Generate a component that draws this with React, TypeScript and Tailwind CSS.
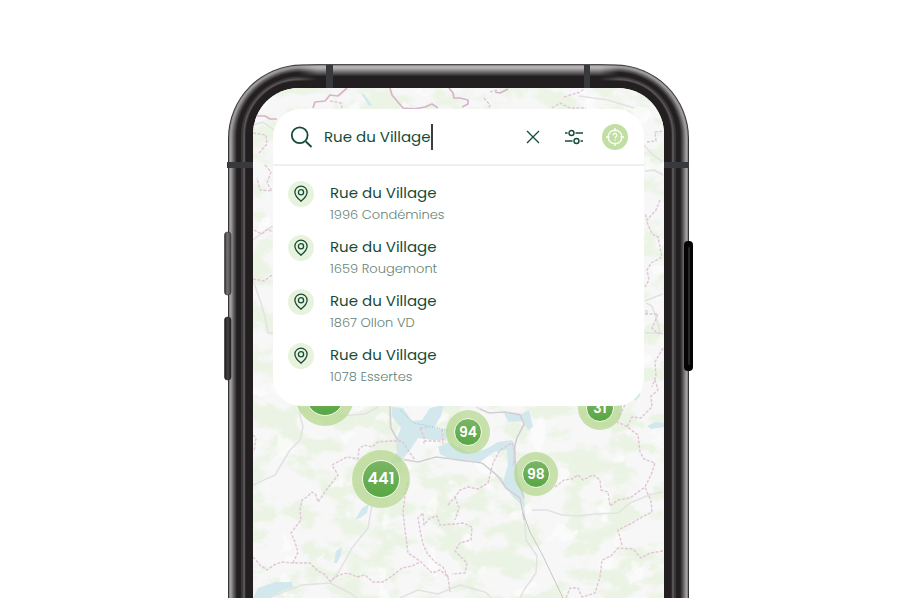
import type { ReactNode } from "react";

const addresses = ["1996 Condémines", "1659 Rougemont", "1867 Ollon VD", "1078 Essertes"];

const bezel: [number, string][] = [
  [0, "#353334"],
  [1, "#8d8b8c"],
  [2, "#a3a1a2"],
  [3, "#939192"],
  [4, "#7c7a7b"],
  [5, "#666465"],
  [6, "#504e4f"],
  [7, "#3e3c3d"],
  [8, "#2a2728"],
  [9, "#231f20"],
  [13, "#3b3839"],
  [15, "#565354"],
  [17, "#2f2c2d"],
  [18, "#231f20"],
];

const borders = [
  "M253 557L260 565L267 570L274 565L282 562L293 563L310 563L318 571L324 574L330 581L339 575L348 573L357 577L365 575L373 582L383 582L392 576L402 568L412 566L420 562",
  "M293 563L298 552L295 542L291 533L297 525L301 520L300 510L302 500L307 497L312 492L316 495L318 502L327 489L338 475L332 465L347 457L358 459L359 449L364 445L372 447L378 442L390 441L402 441L408 450L415 460",
  "M408 483L405 495L403 513L405 530L408 553L420 561L432 573L440 570L448 577L450 592",
  "M448 577L443 567L435 562L427 553L423 544L420 530L418 518L423 513L424 525L430 518L437 516L440 525L455 524L463 523L472 527L471 540L460 543L455 551L467 563L465 573L452 574",
  "M448 505L455 497L460 490L468 487L478 489L488 483L493 463L500 450L512 443L515 452L513 466",
  "M455 497L459 508L455 520",
  "M555 487L564 480L572 479L578 475L583 480L593 475L600 480L601 490L608 492L610 506L618 500L630 498L645 487L651 475L655 463L644 459L640 452L638 435L626 426L617 422L621 413L625 405",
  "M655 380L658 390L651 396L652 407L641 418L632 417L627 427",
  "M663 551L650 553L641 558L633 549L618 548L611 556L602 560L600 577L595 593L582 597L578 588L570 588L566 598",
  "M622 545L618 530L632 523L642 517L652 512L651 501L645 487",
  "M420 428L424 437L424 444M442 429L443 444M420 428L430 427M424 441L443 441",
  "M660 200L656 210L647 220L645 213M647 222L652 234L658 237L662 257L651 263L647 270L649 280L645 287",
  "M645 314L658 314L652 328L657 333L663 334M663 348L655 362L656 376L652 387",
  "M265 165L271 172L267 183L272 191L260 190L257 178M254 230L262 234L268 229L272 232M253 279L264 281L272 275M253 133L266 135L267 144L259 153",
  "M484 98L490 105L487 113M490 92L497 90M552 108L560 103L570 108L586 108M564 97L580 92L584 89M330 101L341 103L342 108M647 142L656 141L655 132L663 131",
  "M253 435L256 438L254 452",
];

const rivers = [
  "M299 400L300 415L303 427L300 440L290 450L275 475L253 485",
  "M340 416L365 414L378 407",
  "M390 407L390 427L397 440L397 450L404 459L418 462L436 457L455 459L482 463L494 472L505 487L518 498L524 510L526 540L537 556L536 573L524 590L520 598",
  "M476 407L488 413L505 412L520 414L525 424L517 437L514 448L518 480L524 500",
  "M532 510L547 510L562 515L578 516L595 514L618 513L630 503L642 498L652 494L663 492",
  "M372 505L368 528L352 548L338 573L330 583L302 585L268 598",
  "M330 583L350 593L357 598M400 598L418 590L438 594L460 585L485 592L492 598",
  "M253 125L263 122L274 130M644 145L653 155L663 162M579 96L608 100L634 108M253 280L260 300L265 317L268 333L274 333M645 301L660 295L663 294M645 333L663 333M646 303L652 306L658 324L660 333M253 240L266 230L273 226M645 171L654 170L663 175",
];

function MapArt() {
  return (
    <svg className="absolute top-0 left-0" width="411" height="510" viewBox="253 88 411 510" aria-hidden="true">
      <defs>
        <filter id="woods" x="0" y="0" width="100%" height="100%" colorInterpolationFilters="sRGB">
          <feTurbulence type="fractalNoise" baseFrequency="0.03 0.042" numOctaves="6" seed="11" />
          <feColorMatrix values="0 0 0 0 0.902  0 0 0 0 0.949  0 0 0 0 0.867  7 0 0 0 -3.2" />
        </filter>
        <filter id="snow" x="0" y="0" width="100%" height="100%" colorInterpolationFilters="sRGB">
          <feTurbulence type="fractalNoise" baseFrequency="0.04" numOctaves="5" seed="4" />
          <feColorMatrix values="0 0 0 0 1  0 0 0 0 1  0 0 0 0 1  12 0 0 0 -7.8" />
        </filter>
      </defs>
      <rect x="253" y="88" width="411" height="510" fill="#f7f7f7" />
      <rect x="253" y="88" width="411" height="510" filter="url(#woods)" opacity=".7" />
      <rect x="253" y="88" width="411" height="510" filter="url(#snow)" opacity=".6" />
      <g fill="#d3e8ec">
        <path d="M392 407L403 408L412 421L422 420L430 408L444 405L441 416L434 428L448 430L446 440L432 440L418 438L410 450L400 462L390 464L397 452L397 438L401 428L392 416Z" />
        <path d="M438 447L450 442L458 447L470 453L486 449L498 442L512 440L516 447L515 475L524 490L525 508L512 496L503 482L508 465L507 450L494 452L480 462L466 462L452 460L440 454Z" />
        <path d="M504 413L522 414L529 410L533 427L528 430L523 421L508 422Z" />
        <path d="M355 520L362 508L369 504L367 513L360 518Z" />
        <path d="M334 563L336 551L342 547L341 555L337 563Z" />
        <path d="M253 598L258 588L275 582L292 582L293 587L278 593L268 598Z" />
        <path d="M647 426L655 422L664 423L664 427L651 429Z" />
        <path d="M634 399L640 391L640 396L635 401ZM361 93L364 94L372 105L369 106ZM645 310L648 310L648 314L645 314Z" />
      </g>
      <path d="M400 410L414 423L452 431" fill="none" stroke="#8fc5dc" strokeDasharray="1 1.5" />
      <g fill="none" stroke="#e2e2e3" strokeWidth="1.5" strokeLinejoin="round">
        {rivers.map((d) => (
          <path key={d} d={d} />
        ))}
      </g>
      <path d="M390 404L391 428L398 440M404 460L418 462L436 457L482 463L500 478L506 488L520 498L524 520M480 409L490 413L505 412L520 415L524 424L517 438L514 450L517 480L524 498" fill="none" stroke="#cdcbcf" strokeWidth="1.2" />
      <path d="M523 513L530 532L542 554L563 598" fill="none" stroke="#c4c8c0" />
      <g fill="none" stroke="#e0c6d6" strokeWidth="1.4" strokeDasharray="3 1.500" strokeLinejoin="round">
        {borders.map((d) => (
          <path key={d} d={d} />
        ))}
      </g>
      <path
        d="M313 108L315 102L325 101L330 95L338 96L347 88M390 88L392 95L397 101L403 108L414 109L425 107L432 104L438 108M453 98L455 98L460 98L468 100L468 104L462 107M495 92L500 93L508 89M256 116L265 116L270 119L277 119M449 88L453 93L454 98"
        fill="none"
        stroke="#d9b3cb"
        strokeWidth="1.7"
        strokeLinejoin="round"
      />
    </svg>
  );
}

function PhoneFrame() {
  return (
    <svg className="absolute -top-1 -left-1" width="470" height="538" viewBox="224 60 470 538" aria-hidden="true">
      <defs>
        <linearGradient id="topEdge" x1="0" y1="64" x2="0" y2="88" gradientUnits="userSpaceOnUse">
          <stop offset="0" stopColor="#2b292a" />
          <stop offset=".06" stopColor="#8f8d8e" />
          <stop offset=".12" stopColor="#bdbcbc" />
          <stop offset=".22" stopColor="#a09e9f" />
          <stop offset=".38" stopColor="#5c595a" />
          <stop offset=".52" stopColor="#231f20" />
        </linearGradient>
        <linearGradient id="fade" x1="298" y1="0" x2="619" y2="0" gradientUnits="userSpaceOnUse">
          <stop offset="0" stopColor="#000" />
          <stop offset=".06" stopColor="#fff" />
          <stop offset=".94" stopColor="#fff" />
          <stop offset="1" stopColor="#000" />
        </linearGradient>
        <mask id="fadeMask" maskUnits="userSpaceOnUse" x="298" y="60" width="321" height="30">
          <rect x="298" y="60" width="321" height="30" fill="url(#fade)" />
        </mask>
        <linearGradient id="key">
          <stop offset="0" stopColor="#252324" />
          <stop offset=".4" stopColor="#777475" />
          <stop offset="1" stopColor="#454243" />
        </linearGradient>
        <linearGradient id="keyDark">
          <stop offset="0" stopColor="#1d1b1c" />
          <stop offset=".5" stopColor="#454243" />
          <stop offset="1" stopColor="#1d1b1c" />
        </linearGradient>
      </defs>
      {bezel.map(([inset, color]) => (
        <rect
          key={inset}
          x={228 + inset}
          y={64.5 + inset * 0.92}
          width={461 - inset * 2}
          height="640"
          rx={74 - inset * 1.15}
          fill={color}
        />
      ))}
      <rect x="298" y="64" width="321" height="24" fill="url(#topEdge)" mask="url(#fadeMask)" />
      <path d="M326 65h7v23h-7zM584 65h6v23h-6zM227 162h26v6h-26zM664 162h25v6h-25z" fill="#38393d" />
      <rect x="224.500" y="232" width="6.500" height="63" rx="3" fill="url(#key)" stroke="#3a3839" strokeWidth=".6" />
      <rect x="224.500" y="317" width="6.500" height="63" rx="3" fill="url(#keyDark)" stroke="#2b292a" strokeWidth=".6" />
      <rect x="684" y="241" width="9" height="130" rx="4" fill="#050505" />
      <rect x="688" y="247" width="2" height="118" rx="1" fill="#262626" />
    </svg>
  );
}

function Cluster({ place, large, children }: { place: string; large?: boolean; children?: ReactNode }) {
  return (
    <div
      className={`absolute flex items-center justify-center rounded-full bg-[#b3d58c]/70 ${large ? "size-[58px]" : "size-11"} ${place}`}
    >
      <div
        className={`flex items-center justify-center rounded-full border border-[#f2f9ea] bg-linear-to-b from-[#7bb565] to-[#57a743] font-semibold text-white ${large ? "size-[38px] text-base" : "size-7 text-sm"}`}
      >
        {children}
      </div>
    </div>
  );
}

function PinIcon() {
  return (
    <svg width="16" height="18" viewBox="0 0 16 18" fill="none" stroke="#164b36" strokeWidth="1.300" strokeLinejoin="round" aria-hidden="true">
      <path d="M8 16.200C5.800 14.300 1.900 11.200 1.900 7.200a6.100 6.100 0 0 1 12.200 0C14.100 11.200 10.200 14.300 8 16.200Z" />
      <circle cx="8" cy="7.200" r="2.600" />
    </svg>
  );
}

export default function App() {
  return (
    <main className="flex h-screen justify-center overflow-hidden bg-white pt-16 pr-[3px] font-['Poppins','Inter',sans-serif]">
      <div className="relative h-full w-[461px] shrink-0 px-[25px] pt-6">
        <PhoneFrame />
        <div className="relative h-full overflow-hidden rounded-t-[46px] bg-[#f6f6f6] px-5 pt-[21px]">
          <MapArt />
          <Cluster place="top-[280px] left-[43px]" large />
          <Cluster place="top-[362px] left-[99px]" large>441</Cluster>
          <Cluster place="top-[322px] left-[193px]">94</Cluster>
          <Cluster place="top-[364px] left-[261px]">98</Cluster>
          <Cluster place="top-[298px] left-[325px]">31</Cluster>

          <section className="relative rounded-[28px] bg-white text-[#164b36]">
            <form className="flex h-[57px] items-center border-b-2 border-[#efefef] pr-4 pl-[17px]" onSubmit={(e) => e.preventDefault()}>
              <label htmlFor="address" aria-label="Adresse">
                <svg width="24" height="24" viewBox="0 0 24 24" fill="none" stroke="#164b36" strokeWidth="1.800" aria-hidden="true">
                  <circle cx="9.700" cy="10.200" r="7.900" />
                  <path d="M15.800 16.500L21.500 22" />
                </svg>
              </label>
              <input id="address" className="ml-2.5 field-sizing-content bg-transparent text-[15px] leading-6 outline-none" defaultValue="Rue du Village" />
              <span className="h-[26px] w-0.5 bg-[#3a3f3d]" />
              <div className="ml-auto flex items-center gap-[15px]">
                <button type="button" aria-label="Effacer" className="flex size-[26px] items-center justify-center">
                  <svg width="14" height="14" viewBox="0 0 14 14" stroke="#164b36" strokeWidth="1.300">
                    <path d="M1 1l12 12M13 1L1 13" />
                  </svg>
                </button>
                <button type="button" aria-label="Filtres" className="flex size-[26px] items-center justify-center">
                  <svg width="20" height="16" viewBox="0 0 20 16" fill="none" stroke="#164b36" strokeWidth="1.400">
                    <circle cx="7.500" cy="4" r="2.500" />
                    <circle cx="12.500" cy="12" r="2.500" />
                    <path d="M1 4h2.600M11.500 4H19M1 12h7.500M16.500 12H19" />
                  </svg>
                </button>
                <button type="button" aria-label="Ma position" className="flex size-[26px] items-center justify-center rounded-full bg-[#c1dfa3]">
                  <svg width="18" height="18" viewBox="0 0 18 18" fill="none" stroke="#fff" strokeWidth="1.300">
                    <circle cx="9" cy="9" r="6.900" />
                    <path d="M9 0v3.500M9 14.500v3.500M0 9h3.500M14.500 9h3.500" />
                    <path d="M7.200 7.300a1.800 1.800 0 1 1 2.700 1.500c-.6.400-.9.700-.9 1.400M9 11.500v1.200" />
                  </svg>
                </button>
              </div>
            </form>
            <ul className="flex flex-col gap-2.5 px-[15px] pt-[15px] pb-[19px]">
              {addresses.map((address) => (
                <li key={address}>
                  <button type="button" className="flex w-full items-start gap-4 text-left">
                    <span className="flex size-[26px] items-center justify-center rounded-full bg-[#e8f3dd]">
                      <PinIcon />
                    </span>
                    <span className="flex flex-col">
                      <span className="text-[15px] leading-6">Rue du Village</span>
                      <span className="text-[13px] leading-5 font-light text-[#648376]">{address}</span>
                    </span>
                  </button>
                </li>
              ))}
            </ul>
          </section>
        </div>
      </div>
    </main>
  );
}
